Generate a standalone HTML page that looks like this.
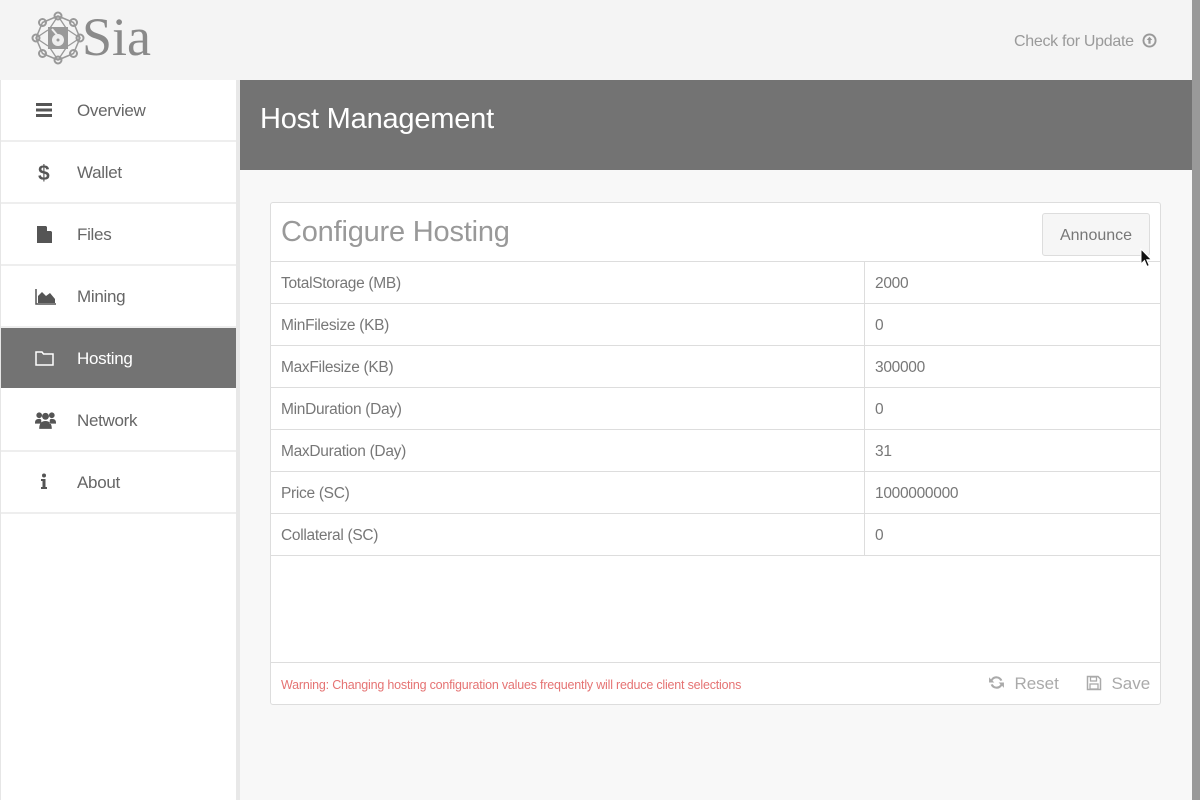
<!DOCTYPE html>
<html><head><meta charset="utf-8"><style>
*{box-sizing:border-box;margin:0;padding:0}
body{width:1200px;height:800px;overflow:hidden;background:#f8f8f8;font-family:"Liberation Sans",sans-serif;position:relative}
.hdr{position:absolute;left:0;top:0;width:1192px;height:80px;background:#f4f4f4}
.logo{position:absolute;left:30px;top:10px}
.siatxt{position:absolute;left:82px;top:9px;font-family:"Liberation Serif",serif;font-size:54px;line-height:56px;color:#8a8a8a}
.upd{position:absolute;right:35px;top:33px;color:#9a9a9a;font-size:16px;letter-spacing:-0.3px}
.side{position:absolute;left:0;top:80px;width:236px;height:720px;background:#fff;border-left:1px solid #e6e6e6}
.strip{position:absolute;left:236px;top:80px;width:4px;height:720px;background:#e8e8e8}
.item{height:62px;border-bottom:2px solid #eee;position:relative;color:#666;font-size:17px;letter-spacing:-0.3px}
.item span{position:absolute;left:76px;top:21px}
.item svg{position:absolute;left:34px;top:21px}
.item.act{background:#737373;color:#fff;border-bottom:2px solid #fff}
.scroll{position:absolute;left:1192px;top:0;width:8px;height:800px;background:#999}
.title{position:absolute;left:240px;top:80px;width:952px;height:90px;background:#737373;color:#fff;font-size:29px;padding:23px 0 0 20px;letter-spacing:-0.2px}
.panel{position:absolute;left:270px;top:202px;width:891px;height:503px;background:#fff;border:1px solid #ddd;border-radius:3px}
.ph{height:59px;border-bottom:1px solid #ddd;position:relative}
.ph h2{font-weight:normal;font-size:29px;color:#999;position:absolute;left:10px;top:13px;letter-spacing:-0.2px}
.ann{position:absolute;left:771px;top:10px;width:108px;height:43px;border:1px solid #ddd;border-radius:3px;background:#f6f6f6;color:#777;font-size:16px;text-align:center;line-height:43px}
.row{height:42px;border-bottom:1px solid #ddd;position:relative;font-size:15.5px;color:#777;letter-spacing:-0.3px}
.row .a{position:absolute;left:10px;top:13px}
.row .b{position:absolute;left:593px;top:0;height:41px;border-left:1px solid #ddd;padding:13px 0 0 10px}
.foot{position:absolute;left:0;top:459px;width:889px;height:42px;border-top:1px solid #ddd}
.warn{position:absolute;left:10px;top:15px;color:#e57373;font-size:12.5px;letter-spacing:-0.2px}
.btn{position:absolute;top:11px;color:#aaa;font-size:17px}
</style></head><body>
<div class="hdr">
<svg class="logo" width="56" height="56" viewBox="0 0 56 56" fill="none" stroke="#999" stroke-width="2">
<g>
<circle cx="28" cy="6" r="3.5"/><circle cx="43.5" cy="12.5" r="3.5"/><circle cx="50" cy="28" r="3.5"/><circle cx="43.5" cy="43.5" r="3.5"/><circle cx="28" cy="50" r="3.5"/><circle cx="12.5" cy="43.5" r="3.5"/><circle cx="6" cy="28" r="3.5"/><circle cx="12.5" cy="12.5" r="3.5"/>
<path d="M28 6L43.5 12.5L50 28L43.5 43.5L28 50L12.5 43.5L6 28L12.5 12.5Z" stroke-width="1.5"/>
<path d="M28 6L20 18M28 6L36 18M6 28L18 20M6 28L18 36M50 28L38 20M50 28L38 36M28 50L20 38M28 50L36 38" stroke-width="1.3"/>
</g>
<rect x="18" y="17" width="20" height="22" fill="#999" stroke="none"/>
<circle cx="28" cy="30" r="6" fill="#eee" stroke="none"/><circle cx="28" cy="30" r="1.5" fill="#999" stroke="none"/>
<path d="M22 19L28 26" stroke="#eee" stroke-width="2"/>
</svg>
<div class="siatxt">Sia</div>
<div class="upd">Check for Update &nbsp;<svg width="15" height="15" viewBox="0 0 16 16" style="vertical-align:-2px"><circle cx="8" cy="8" r="6.5" fill="none" stroke="#999" stroke-width="2"/><path d="M8 4L11 7.5H9.2V11.5H6.8V7.5H5Z" fill="#999"/></svg></div>
</div>
<div class="side">
<div class="item"><svg width="18" height="18" viewBox="0 0 18 18"><rect x="1" y="2" width="16" height="3" fill="#555"/><rect x="1" y="7.5" width="16" height="3" fill="#555"/><rect x="1" y="13" width="16" height="3" fill="#555"/></svg><span>Overview</span></div>
<div class="item"><svg width="18" height="20" viewBox="0 0 18 20"><text x="3" y="17" font-size="21" font-weight="bold" fill="#555" font-family="Liberation Sans">$</text></svg><span>Wallet</span></div>
<div class="item"><svg width="18" height="19" viewBox="0 0 18 19"><path d="M2 1H11L17 7V18H2Z" fill="#555"/><path d="M12 1V6H17" fill="#fff"/></svg><span>Files</span></div>
<div class="item"><svg width="22" height="19" viewBox="0 0 22 19"><path d="M1 2V17H21" stroke="#555" stroke-width="1.5" fill="none"/><path d="M3 16V9L7 5L11 9L15 6L20 12V16Z" fill="#555"/></svg><span>Mining</span></div>
<div class="item act"><svg width="19" height="18" viewBox="0 0 19 18"><path d="M1 3H7L8.5 5H18V16H1Z" fill="none" stroke="#fff" stroke-width="1.5"/></svg><span>Hosting</span></div>
<div class="item"><svg width="21" height="19" viewBox="0 0 20 18"><circle cx="4" cy="4" r="2.7" fill="#555"/><circle cx="16" cy="4" r="2.7" fill="#555"/><circle cx="10" cy="5" r="3.3" fill="#555"/><path d="M0 11Q0 7.5 4 7.5Q6 7.5 6 9V12H0Z M20 11Q20 7.5 16 7.5Q14 7.5 14 9V12H20Z M4 17Q4 9.5 10 9.5Q16 9.5 16 17Z" fill="#555"/></svg><span>Network</span></div>
<div class="item"><svg width="18" height="18" viewBox="0 0 18 18"><circle cx="9" cy="2.5" r="2" fill="#555"/><path d="M6 6H10.5V14H12V16H6V14H7.5V8H6Z" fill="#555"/></svg><span>About</span></div>
</div>
<div class="strip"></div>
<div class="title">Host Management</div>
<div class="panel">
<div class="ph"><h2>Configure Hosting</h2><div class="ann">Announce</div></div>
<div class="row"><span class="a">TotalStorage (MB)</span><span class="b">2000</span></div>
<div class="row"><span class="a">MinFilesize (KB)</span><span class="b">0</span></div>
<div class="row"><span class="a">MaxFilesize (KB)</span><span class="b">300000</span></div>
<div class="row"><span class="a">MinDuration (Day)</span><span class="b">0</span></div>
<div class="row"><span class="a">MaxDuration (Day)</span><span class="b">31</span></div>
<div class="row"><span class="a">Price (SC)</span><span class="b">1000000000</span></div>
<div class="row"><span class="a">Collateral (SC)</span><span class="b">0</span></div>
<div class="foot">
<span class="warn">Warning: Changing hosting configuration values frequently will reduce client selections</span>
<span class="btn" style="left:717px"><svg width="17" height="17" viewBox="0 0 16 16" style="vertical-align:-2px"><path d="M13.5 6A6 6 0 0 0 2.8 5L1 3V8H6L4.3 6.3A4 4 0 0 1 11.5 6.5Z M2.5 10A6 6 0 0 0 13.2 11L15 13V8H10L11.7 9.7A4 4 0 0 1 4.5 9.5Z" fill="#aaa"/></svg>&nbsp; Reset</span>
<span class="btn" style="left:815px"><svg width="16" height="16" viewBox="0 0 16 16" style="vertical-align:-2px"><path d="M1.5 1.5H12L14.5 4V14.5H1.5Z" fill="none" stroke="#aaa" stroke-width="1.5"/><rect x="4.5" y="2" width="6" height="4" fill="none" stroke="#aaa" stroke-width="1.3"/><rect x="4" y="9" width="8" height="5" fill="none" stroke="#aaa" stroke-width="1.3"/></svg>&nbsp; Save</span>
</div>
</div>
<svg style="position:absolute;left:1140px;top:248px" width="14" height="20" viewBox="0 0 14 20"><path d="M1 1V16L4.5 12.5L7 18.5L9.3 17.5L6.8 11.8H11.5Z" fill="#111" stroke="#fff" stroke-width="1"/></svg>
<div class="scroll"></div>
</body></html>
